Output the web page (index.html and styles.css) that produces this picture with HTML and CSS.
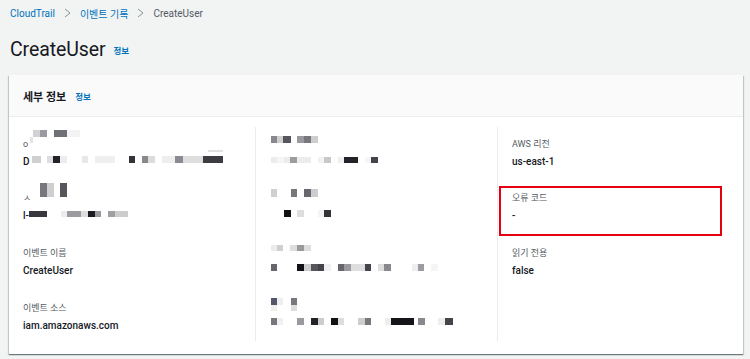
FILE: index.html
```html
<!DOCTYPE html>
<html lang="ko">
<head>
    <meta charset="UTF-8">
    <meta name="viewport" content="width=device-width, initial-scale=1.0">
    <title>CreateUser - CloudTrail</title>
    <link rel="stylesheet" href="styles.css">
</head>
<body>
    <nav class="crumbs">
        <a href="#">CloudTrail</a>
        <svg class="sep" width="7" height="10" viewBox="0 0 7 10"><path d="M1 1 L6 5 L1 9" /></svg>
        <a href="#">이벤트 기록</a>
        <svg class="sep" width="7" height="10" viewBox="0 0 7 10"><path d="M1 1 L6 5 L1 9" /></svg>
        <span class="current">CreateUser</span>
    </nav>

    <div class="page-head">
        <h1>CreateUser</h1>
        <a href="#" class="info">정보</a>
    </div>

    <section class="panel">
        <header class="panel-head">
            <h2>세부 정보</h2>
            <a href="#" class="info">정보</a>
        </header>
        <div class="panel-body">
            <div class="col">
                <div class="field"><div class="label">o</div><div class="value">D</div></div>
                <div class="field"><div class="label">ㅅ</div><div class="value">l-</div></div>
                <div class="field"><div class="label">이벤트 이름</div><div class="value">CreateUser</div></div>
                <div class="field"><div class="label">이벤트 소스</div><div class="value">iam.amazonaws.com</div></div>
            </div>
            <div class="col">
                <div class="field"><div class="label">&nbsp;</div><div class="value">&nbsp;</div></div>
                <div class="field"><div class="label">&nbsp;</div><div class="value">&nbsp;</div></div>
                <div class="field"><div class="label">&nbsp;</div><div class="value">&nbsp;</div></div>
                <div class="field"><div class="label">&nbsp;</div><div class="value">&nbsp;</div></div>
            </div>
            <div class="col">
                <div class="field"><div class="label">AWS 리전</div><div class="value">us-east-1</div></div>
                <div class="field flagged"><div class="label">오류 코드</div><div class="value">-</div></div>
                <div class="field"><div class="label">읽기 전용</div><div class="value">false</div></div>
            </div>
        </div>
    </section>

    <!-- 개인정보 모자이크 -->
    <canvas class="redact" id="redact" width="750" height="359"></canvas>

    <script>
        // [x, y, w, h, color] (page coordinates)
        const blocks = [
            // column 1, field 1
            [33,130,7,7,'#d2d2d4'],[40,130,7,7,'#9a9aa0'],[54,130,13,7,'#6f6f78'],[67,130,13,7,'#f3f3f3'],
            [30,137,3,6,'#e4e4e4'],
            [32,156,9,7,'#cfcfd1'],[47,156,6,7,'#dedede'],[53,156,7,7,'#222228'],[60,156,7,7,'#ededed'],
            [82,156,6,7,'#e8e8e8'],[95,156,20,7,'#efefef'],[129,156,6,7,'#333338'],[142,156,6,7,'#88888e'],
            [148,156,7,7,'#dcdcdc'],[162,156,13,7,'#eeeeee'],[175,156,8,7,'#8a8a90'],[183,156,20,7,'#dedede'],
            [203,156,20,7,'#3c3c42'],[208,150,15,2,'#e0e0e0'],
            // column 1, field 2
            [40,183,7,14,'#77777e'],[47,183,7,14,'#cfcfd1'],[60,183,7,14,'#55555c'],
            [29,211,18,6,'#38383e'],[61,211,6,6,'#ededed'],[67,211,14,6,'#9c9ca0'],[81,211,7,6,'#dddddd'],
            [88,211,7,6,'#1a1a20'],[95,211,6,6,'#9a9a9e'],[108,211,7,6,'#a0a0a4'],[115,211,13,6,'#cdcdcd'],
            // column 2, field 1
            [271,136,6,7,'#88888e'],[277,136,6,7,'#cfcfcf'],[283,136,8,7,'#55555c'],[297,136,7,7,'#9a9a9e'],
            [304,136,7,7,'#77777e'],[311,136,7,7,'#cdcdcd'],
            [271,157,6,6,'#ececec'],[277,157,7,6,'#f5f5f5'],[284,157,6,6,'#ececec'],[290,157,7,6,'#9c9ca0'],
            [297,157,14,6,'#ececec'],[318,157,6,6,'#f2f2f2'],[324,157,7,6,'#c8c8ca'],[338,157,6,6,'#f0f0f0'],
            [344,157,14,6,'#222228'],[365,157,6,6,'#f6f6f6'],[371,157,7,6,'#44444a'],
            // column 2, field 2
            [271,189,6,8,'#cfcfd1'],[291,189,6,8,'#77777e'],[304,189,7,8,'#66666c'],[311,189,7,8,'#cdcdcd'],
            [284,210,7,7,'#111116'],[297,210,7,7,'#dddddd'],[318,210,6,7,'#f4f4f4'],[324,210,7,7,'#333338'],
            // column 2, field 3
            [271,245,6,6,'#ececec'],[277,245,6,6,'#cfcfcf'],[290,245,7,6,'#dddddd'],[297,245,7,6,'#9a9a9e'],
            [304,245,7,6,'#dddddd'],
            [271,264,6,7,'#66666c'],[297,264,7,7,'#111116'],[304,264,7,7,'#cdcdcd'],[311,264,7,7,'#55555c'],
            [318,264,6,7,'#44444a'],[324,264,7,7,'#f0f0f0'],[338,264,6,7,'#66666c'],[344,264,7,7,'#9a9a9e'],
            [351,264,14,7,'#dedede'],[365,264,6,7,'#44444a'],[378,264,6,7,'#dedede'],[384,264,7,7,'#88888e'],
            [412,264,6,7,'#eeeeee'],[418,264,6,7,'#9c9ca0'],[431,264,7,7,'#f5f5f5'],
            // column 2, field 4
            [271,298,6,7,'#55556a'],[277,298,6,7,'#eeeeee'],[291,298,6,7,'#77777e'],
            [271,305,6,6,'#eeeeee'],[291,305,6,6,'#dddddd'],
            [271,318,6,7,'#77777e'],[277,318,6,7,'#f0f0f0'],[297,318,7,7,'#9a9a9e'],[311,318,7,7,'#222228'],
            [318,318,6,7,'#cdcdcd'],[331,318,7,7,'#111116'],[338,318,6,7,'#dddddd'],[358,318,7,7,'#cdcdcd'],
            [365,318,6,7,'#77777e'],[385,318,6,7,'#eeeeee'],[391,318,23,7,'#151519'],[418,318,7,7,'#88888e'],
            [438,318,7,7,'#eeeeee'],[445,318,8,7,'#44444a']
        ];

        const ctx = document.getElementById('redact').getContext('2d');
        blocks.forEach(([x, y, w, h, c]) => {
            ctx.fillStyle = c;
            ctx.fillRect(x, y, w, h);
        });
    </script>
</body>
</html>
```

FILE: styles.css
```css
* {
    box-sizing: border-box;
}

body {
    margin: 0;
    background: #f2f3f3;
    font-family: Roboto, "Noto Sans CJK KR", sans-serif;
    color: #16191f;
    width: 750px;
    height: 359px;
    overflow: hidden;
    position: relative;
}

a {
    color: #0073bb;
    text-decoration: none;
}

.crumbs {
    display: flex;
    align-items: center;
    height: 26px;
    padding: 0 10px;
    font-size: 10px;
}

.crumbs .sep {
    margin: 0 9px;
}

.crumbs .sep path {
    fill: none;
    stroke: #879596;
    stroke-width: 1;
}

.crumbs .current {
    color: #545b64;
}

.page-head {
    display: flex;
    align-items: center;
    height: 49px;
    padding: 0 10px 2px;
}

h1 {
    margin: 0;
    font-size: 19.5px;
    font-weight: 400;
    letter-spacing: -0.1px;
}

.info {
    font-size: 8.5px;
    font-weight: 700;
    margin-left: 8px;
}

.panel {
    margin: 0 7px 0 9px;
    background: #fff;
    box-shadow: 0 1px 1px 0 rgba(0, 28, 36, 0.4),
        1px 1px 1px 0 rgba(0, 28, 36, 0.15),
        -1px 1px 1px 0 rgba(0, 28, 36, 0.15);
}

.panel-head {
    display: flex;
    align-items: center;
    height: 42px;
    padding: 0 14px;
    background: #fafafa;
    border-bottom: 1px solid #eaeded;
}

h2 {
    margin: 0;
    font-size: 11px;
    font-weight: 700;
}

.panel-head .info {
    margin-left: 9px;
}

.panel-body {
    display: grid;
    grid-template-columns: 246px 242px 246px;
    padding: 10px 0 13px;
}

.col {
    height: 214px;
    padding: 8.5px 14px 0;
}

.col + .col {
    border-left: 1px solid #eaeded;
}

.field {
    position: relative;
    margin-bottom: 20.7px;
}

.label {
    font-size: 9px;
    line-height: 17px;
    color: #545b64;
}

.value {
    font-size: 10px;
    line-height: 17px;
    font-weight: 500;
    color: #16191f;
}

.field.flagged::after {
    content: "";
    position: absolute;
    top: -4px;
    left: -13px;
    width: 219px;
    height: 46px;
    border: 2px solid #e3000f;
}

.redact {
    position: absolute;
    top: 0;
    left: 0;
    pointer-events: none;
}
```
